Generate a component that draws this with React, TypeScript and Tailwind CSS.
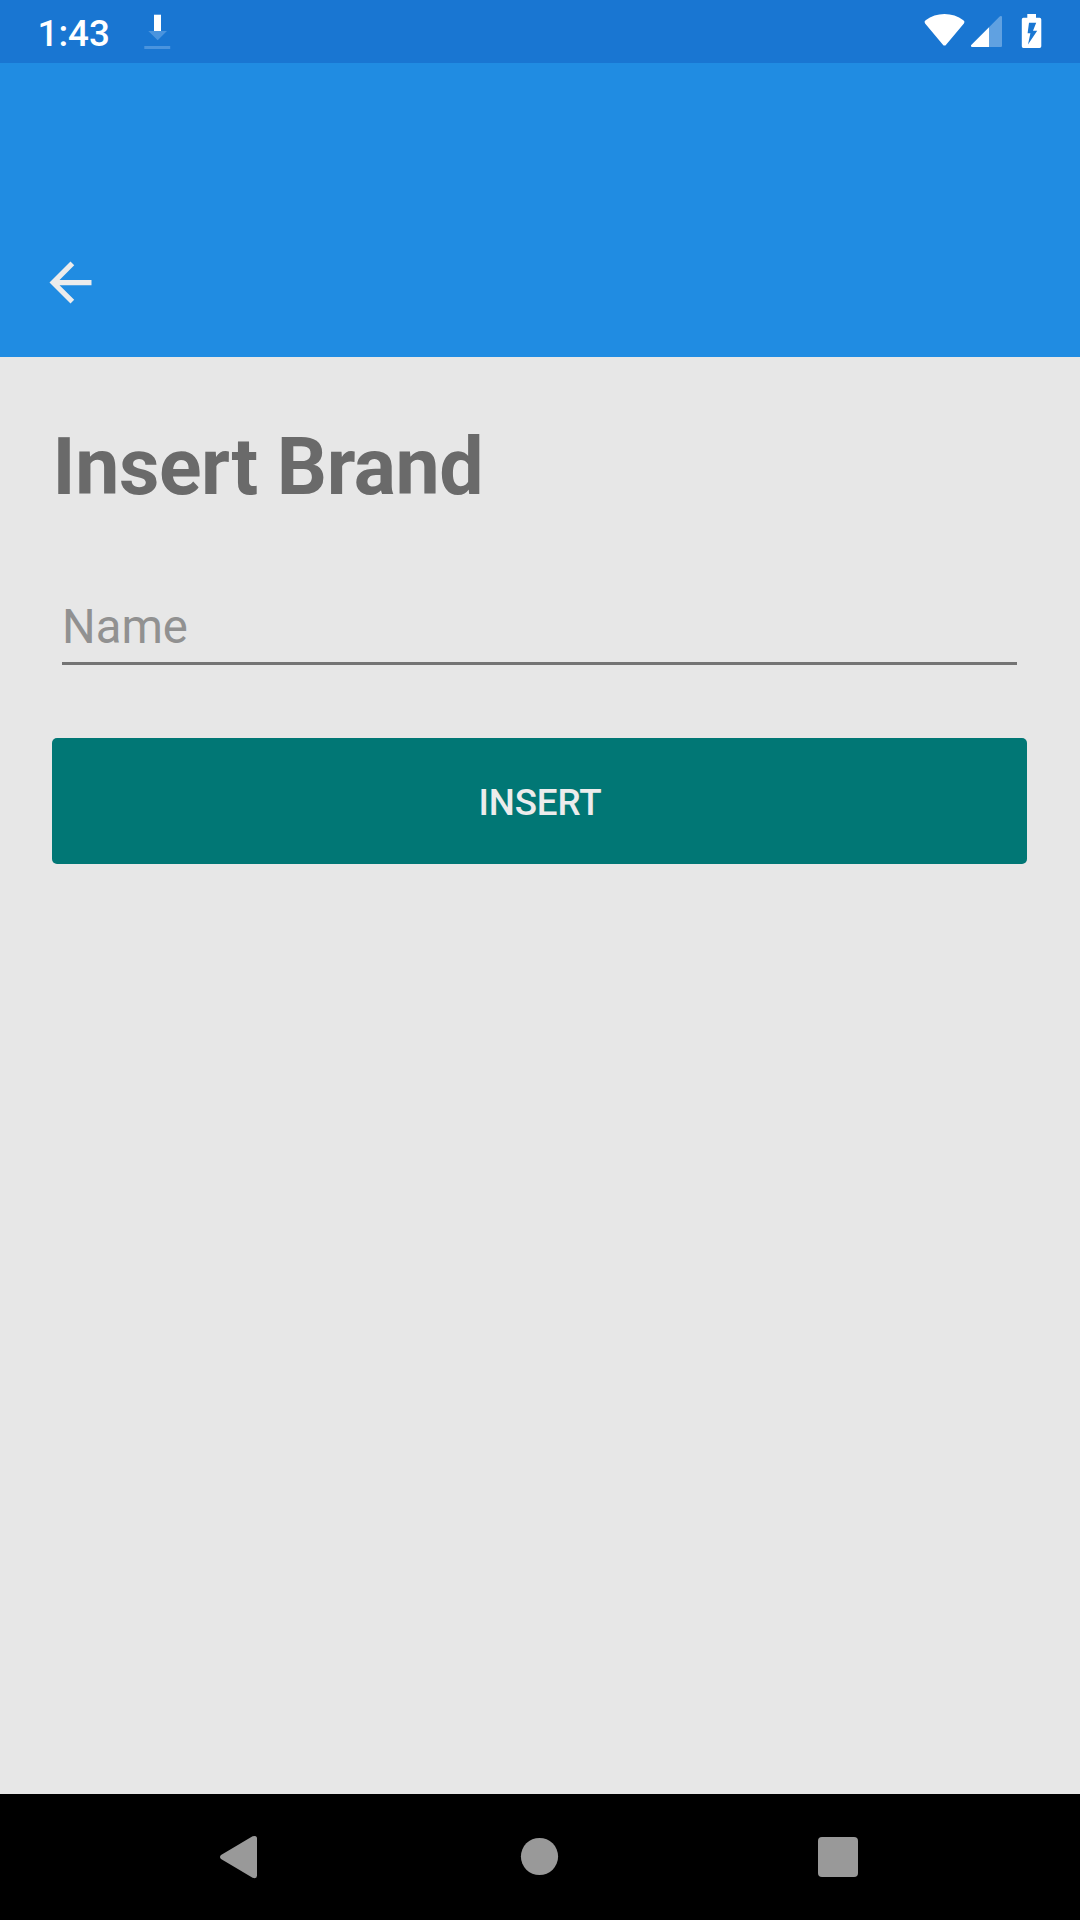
import React from "react";

function StatusBar() {
  return (
    <div className="flex h-[63px] items-start bg-[#1976d2]">
      <span className="ml-[37.5px] mt-[2px] w-[106.5px] text-[36.75px] leading-[63px] font-medium text-white">
        1:43
      </span>
      <svg className="h-[63px] w-[28px]" viewBox="144 0 28 63">
        <path d="M154 14.7h7V31h-7z" fill="#fff" />
        <path d="M148.3 31H167l-9.3 9.3z M144.3 46h25.9v3h-25.9z" fill="#4a94de" />
      </svg>
      <svg className="ml-auto mr-[36px] h-[63px] w-[124px]" viewBox="920 0 124 63">
        <path
          d="M925.1 23.4Q923.6 21.7 925.6 20.3Q934 14 944.5 14Q955 14 963.4 20.3Q965.4 21.7 963.9 23.4L946.3 44.4Q944.5 46.8 942.7 44.4z"
          fill="#fff"
        />
        <path d="M989 27.2L998.9 17.2Q1000 16 1001 16Q1002 16 1002 17V46Q1002 47 1001 47H989z" fill="#60a1e1" />
        <path d="M989 27.2V47H972Q971 47 971 46V45.2z" fill="#fff" />
        <path
          fillRule="evenodd"
          d="M1027.3 14h8.7v3.7h3.6Q1041.3 17.7 1041.3 19.4V46.2Q1041.3 47.9 1039.6 47.9H1023.4Q1021.8 47.9 1021.8 46.2V19.4Q1021.8 17.7 1023.4 17.7H1027.3z M1029 22.8L1027.6 33.3H1030.4L1028 44.5L1037.2 30.8H1033L1036.2 22.8z"
          fill="#fff"
        />
      </svg>
    </div>
  );
}

function AppBar() {
  return (
    <header className="flex h-[294px] flex-col justify-end bg-[#208ce2] pb-[43px] pl-[39px]">
      <button className="size-[63px]" aria-label="Back">
        <svg className="size-full" viewBox="0 0 24 24" fill="#ececec">
          <path d="M20 11H7.83l5.59-5.59L12 4l-8 8 8 8 1.41-1.41L7.83 13H20v-2z" />
        </svg>
      </button>
    </header>
  );
}

function NavigationBar() {
  return (
    <nav className="h-[126px] bg-black">
      <svg className="h-[126px] w-full" viewBox="0 1794 1080 126" fill="#999">
        <path d="M221 1855L252.6 1836.3Q257 1834.8 257 1838.6V1875.6Q257 1879.2 252.6 1877.7L221 1859Q219 1857 221 1855z" />
        <circle cx="539.5" cy="1856.5" r="18.6" />
        <rect x="818" y="1837" width="40" height="40" rx="4" />
      </svg>
    </nav>
  );
}

export default function App() {
  return (
    <div className="flex h-[1920px] w-[1080px] flex-col overflow-hidden bg-[#e7e7e7] font-['Roboto',sans-serif]">
      <StatusBar />
      <AppBar />
      <main className="flex grow flex-col pt-[59px] pr-[53px] pl-[52px]">
        <h1 className="ml-[0.5px] text-[78.75px] leading-[102px] font-bold tracking-[-0.4px] text-[#6a6a6a]">
          Insert Brand
        </h1>
        <div className="mx-[10px] mt-[79px] h-[68px] border-b-3 border-[#747474]">
          <input
            className="block h-[60px] w-full bg-transparent text-[47.25px] leading-[60px] text-[#6a6a6a] outline-none placeholder:text-[#919191]"
            placeholder="Name"
          />
        </div>
        <button className="mt-[73px] h-[126px] rounded-[5px] bg-[#017775] pt-[3px] pl-[1px] text-[36.75px] font-medium tracking-[-0.1px] text-[#ececec]">
          INSERT
        </button>
      </main>
      <NavigationBar />
    </div>
  );
}
